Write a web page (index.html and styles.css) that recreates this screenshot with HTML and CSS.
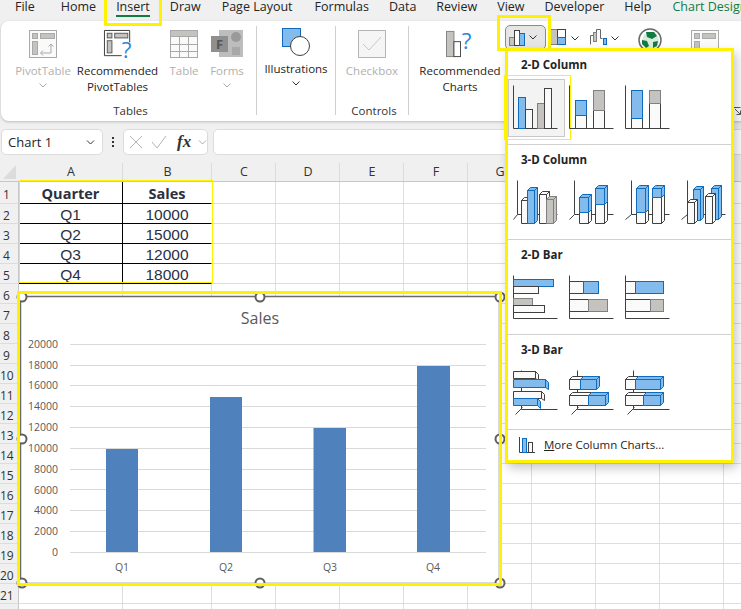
FILE: index.html
```html
<!DOCTYPE html>
<html lang="en">
<head>
<meta charset="utf-8">
<title>Insert chart</title>
<link rel="stylesheet" href="styles.css">
</head>
<body>
<div class="app">
  <nav class="tabs">
    <span class="tab t-file">File</span>
    <span class="tab t-home">Home</span>
    <span class="tab active">Insert</span>
    <span class="tab">Draw</span>
    <span class="tab t-pl">Page Layout</span>
    <span class="tab t-form">Formulas</span>
    <span class="tab">Data</span>
    <span class="tab">Review</span>
    <span class="tab">View</span>
    <span class="tab">Developer</span>
    <span class="tab">Help</span>
    <span class="tab green t-cd">Chart Design</span>
  </nav>

  <section class="ribbon">
    <div class="group g-tables">
      <div class="btns">
        <div class="rb w-pt dis">
          <svg class="ri" viewBox="0 0 28 28"><g class="dim"><rect x=".5" y=".5" width="27" height="27" class="fr"/><rect x="3.5" y="3.5" width="5" height="5"/><rect x="11.5" y="3.5" width="14" height="5"/><rect x="3.5" y="11.5" width="5" height="13"/><path class="ln" d="M12 23h10v-9M19.500 16.500l2.500-2.500 2.500 2.500M14 20.500l-2.500 2.500 2.500 2.500"/></g></svg>
          <span class="lb">PivotTable</span>
          <svg class="chev" viewBox="0 0 8 5"><path d="M.5.5 4 4 7.500.5"/></svg>
        </div>
        <div class="rb w-rec">
          <svg class="ri" viewBox="0 0 30 30"><g class="drk"><path class="ln" d="M19 27.500H.5V.500h27V13"/><rect x="3.500" y="3.500" width="5" height="5"/><rect x="11.500" y="3.500" width="14" height="5"/><rect x="3.500" y="11.500" width="5" height="13"/></g><text x="19" y="30" class="q">?</text></svg>
          <span class="lb">Recommended<br>PivotTables</span>
        </div>
        <div class="rb w-tb dis">
          <svg class="ri" viewBox="0 0 28 28"><g class="dim"><rect class="fr" x=".5" y=".5" width="27" height="27"/><rect x=".5" y=".5" width="27" height="6"/><path class="ln" d="M9.500 7v21M18.500 7v21M0 14.500h28M0 21.500h28"/></g></svg>
          <span class="lb">Table</span>
        </div>
        <div class="rb w-fm dis">
          <svg class="ri wide" viewBox="0 0 32 28"><rect x="8" y="0" width="24" height="27" fill="#bdbdbd"/><circle cx="25" cy="7" r="5" fill="#9a9a9a"/><rect x="21" y="17" width="8" height="8" fill="#a8a8a8"/><rect x="0" y="6" width="17" height="16" fill="#8f8f8f"/><text x="5" y="19" class="f">F</text></svg>
          <span class="lb">Forms</span>
          <svg class="chev" viewBox="0 0 8 5"><path d="M.5.5 4 4 7.500.5"/></svg>
        </div>
      </div>
      <div class="glabel">Tables</div>
    </div>
    <div class="sep"></div>
    <div class="group g-ill">
      <div class="btns">
        <div class="rb w-ill up">
          <svg class="ri" viewBox="0 0 28 28"><rect x=".5" y=".5" width="18" height="18" fill="#83bbed" stroke="#0f6cbd"/><circle cx="18" cy="18" r="9.500" fill="#fff" stroke="#404040"/></svg>
          <span class="lb">Illustrations</span>
          <svg class="chev dk" viewBox="0 0 8 5"><path d="M.5.5 4 4 7.500.5"/></svg>
        </div>
      </div>
    </div>
    <div class="sep"></div>
    <div class="group g-ctl">
      <div class="btns">
        <div class="rb w-cb dis">
          <svg class="ri" viewBox="0 0 28 28"><rect x=".5" y=".5" width="27" height="27" fill="#f5f5f5" stroke="#b5b5b5"/><path d="M5 14l6 6L23 7" fill="none" stroke="#c8c8c8"/></svg>
          <span class="lb">Checkbox</span>
        </div>
      </div>
      <div class="glabel">Controls</div>
    </div>
    <div class="sep"></div>
    <div class="rb w-rc">
      <svg class="ri" viewBox="0 0 30 28"><rect x=".5" y=".5" width="8" height="27" fill="#c4c3bf" stroke="#808080"/><rect x="8.500" y="11.500" width="7" height="16" fill="#fff" stroke="#404040"/><text x="17" y="19" class="q">?</text></svg>
      <span class="lb">Recommended<br>Charts</span>
    </div>
    <div class="minis">
      <div class="mini-active">
        <svg class="mi" viewBox="0 0 17 16"><rect x=".5" y="7.500" width="5" height="8" fill="#c4c3bf" stroke="#808080"/><rect x="5.500" y=".5" width="5" height="15" fill="#fff" stroke="#404040"/><rect x="10.500" y="3.500" width="5" height="12" fill="#83bbed" stroke="#0f6cbd"/></svg>
        <svg class="chev dk" viewBox="0 0 8 5"><path d="M.5.5 4 4 7.500.5"/></svg>
      </div>
      <svg class="mi m2" viewBox="0 0 17 16"><rect x=".5" y=".5" width="7" height="15" fill="#c4c3bf" stroke="#808080"/><rect x="7.500" y=".5" width="8" height="8" fill="#fff" stroke="#404040"/><rect x="7.500" y="8.500" width="8" height="7" fill="#83bbed" stroke="#0f6cbd"/></svg>
      <svg class="chev dk m3" viewBox="0 0 8 5"><path d="M.5.5 4 4 7.500.5"/></svg>
      <svg class="mi m4" viewBox="0 0 17 16"><path d="M.5 15.500V6.500h3v-3h3v-3h4v9h2" fill="#fafafa" stroke="#666"/><rect x="3.500" y="3.500" width="3" height="9" fill="#c4c3bf" stroke="#808080"/><rect x="13.500" y="9.500" width="3" height="6" fill="#83bbed" stroke="#0f6cbd"/></svg>
      <svg class="chev dk m3" viewBox="0 0 8 5"><path d="M.5.5 4 4 7.500.5"/></svg>
      <svg class="globe" viewBox="0 0 24 24"><circle cx="12" cy="12" r="11" fill="#fff" stroke="#6a6a6a" stroke-width="1.500"/><circle cx="12.500" cy="12.500" r="8.500" fill="#d8ecdd"/><path d="M8 4h8l3 4-5 3-5-2zM4 12l5 1 2 5-3 2-4-4zM15 14l5-1-1 5-4 2z" fill="#107c41"/></svg>
      <svg class="pivot" viewBox="0 0 28 28"><g class="dim"><rect class="fr" x=".5" y=".5" width="27" height="27"/><rect x="3.500" y="3.500" width="5" height="5"/><rect x="11.500" y="3.500" width="13" height="5"/><rect x="3.500" y="11.500" width="5" height="13"/></g></svg>
    </div>
    <svg class="launcher" viewBox="0 0 8 8"><path d="M.5.500h7M.5.500v3M2 2l5 5M7.500 3.500v4h-4" fill="none" stroke="#555"/></svg>
  </section>

  <section class="fbar">
    <div class="namebox"><span>Chart 1</span><svg class="chev dk" viewBox="0 0 8 5"><path d="M.5.5 4 4 7.500.5"/></svg></div>
    <div class="dots"><i></i><i></i><i></i></div>
    <div class="fxbox">
      <svg class="fi" viewBox="0 0 14 14"><path d="M1 1l12 12M13 1 1 13" fill="none" stroke="#b3b3b3"/></svg>
      <svg class="fi fc" viewBox="0 0 16 14"><path d="M1 7l5 6L15 1" fill="none" stroke="#b3b3b3"/></svg>
      <span class="fx">fx</span>
      <svg class="chev" viewBox="0 0 8 5"><path d="M.5.5 4 4 7.500.5"/></svg>
    </div>
    <div class="finput"></div>
  </section>

  <section class="sheet">
    <div class="colhead">
      <div class="corner"></div>
      <div class="ch ca">A</div><div class="ch cb">B</div>
      <div class="ch">C</div><div class="ch">D</div><div class="ch">E</div><div class="ch">F</div><div class="ch">G</div><div class="ch"></div><div class="ch"></div><div class="ch"></div>
    </div>
    <div class="row first"><div class="rh">1</div><div class="c ca d head">Quarter</div><div class="c cb d head">Sales</div><div class="rest"></div></div>
    <div class="row"><div class="rh">2</div><div class="c ca d">Q1</div><div class="c cb d">10000</div><div class="rest"></div></div>
    <div class="row"><div class="rh">3</div><div class="c ca d">Q2</div><div class="c cb d">15000</div><div class="rest"></div></div>
    <div class="row"><div class="rh">4</div><div class="c ca d">Q3</div><div class="c cb d">12000</div><div class="rest"></div></div>
    <div class="row"><div class="rh">5</div><div class="c ca d">Q4</div><div class="c cb d">18000</div><div class="rest"></div></div>
    <div class="row"><div class="rh">6</div><div class="c ca"></div><div class="c cb"></div><div class="rest"></div></div>
    <div class="row"><div class="rh">7</div><div class="c ca"></div><div class="c cb"></div><div class="rest"></div></div>
    <div class="row"><div class="rh">8</div><div class="c ca"></div><div class="c cb"></div><div class="rest"></div></div>
    <div class="row"><div class="rh">9</div><div class="c ca"></div><div class="c cb"></div><div class="rest"></div></div>
    <div class="row"><div class="rh">10</div><div class="c ca"></div><div class="c cb"></div><div class="rest"></div></div>
    <div class="row"><div class="rh">11</div><div class="c ca"></div><div class="c cb"></div><div class="rest"></div></div>
    <div class="row"><div class="rh">12</div><div class="c ca"></div><div class="c cb"></div><div class="rest"></div></div>
    <div class="row"><div class="rh">13</div><div class="c ca"></div><div class="c cb"></div><div class="rest"></div></div>
    <div class="row"><div class="rh">14</div><div class="c ca"></div><div class="c cb"></div><div class="rest"></div></div>
    <div class="row"><div class="rh">15</div><div class="c ca"></div><div class="c cb"></div><div class="rest"></div></div>
    <div class="row"><div class="rh">16</div><div class="c ca"></div><div class="c cb"></div><div class="rest"></div></div>
    <div class="row"><div class="rh">17</div><div class="c ca"></div><div class="c cb"></div><div class="rest"></div></div>
    <div class="row"><div class="rh">18</div><div class="c ca"></div><div class="c cb"></div><div class="rest"></div></div>
    <div class="row"><div class="rh">19</div><div class="c ca"></div><div class="c cb"></div><div class="rest"></div></div>
    <div class="row"><div class="rh">20</div><div class="c ca"></div><div class="c cb"></div><div class="rest"></div></div>
    <div class="row"><div class="rh">21</div><div class="c ca"></div><div class="c cb"></div><div class="rest"></div></div>
    <div class="row"><div class="rh"></div><div class="c ca"></div><div class="c cb"></div><div class="rest"></div></div>
  </section>

  <div class="data-frame"></div>

  <svg class="chart" viewBox="15 289 490 300">
    <rect x="20.500" y="296.500" width="479" height="287" fill="#fff" stroke="#6a6a6a" stroke-width="1.500"/>
    <g class="gl">
      <path d="M70 344.500h416M70 365.500h416M70 385.500h416M70 406.500h416M70 427.500h416M70 448.500h416M70 469.500h416M70 489.500h416M70 510.500h416M70 531.500h416M70 552.500h416"/>
    </g>
    <g fill="#4f81bd">
      <rect x="106" y="449" width="32" height="103"/>
      <rect x="210" y="397" width="32" height="155"/>
      <rect x="313.500" y="428" width="32.500" height="124"/>
      <rect x="417" y="366" width="33" height="186"/>
    </g>
    <text x="260" y="324" class="ctitle">Sales</text>
    <g class="ya">
      <text x="58" y="348">20000</text><text x="58" y="369">18000</text><text x="58" y="389">16000</text><text x="58" y="410">14000</text><text x="58" y="431">12000</text><text x="58" y="452">10000</text><text x="58" y="473">8000</text><text x="58" y="494">6000</text><text x="58" y="514">4000</text><text x="58" y="535">2000</text><text x="58" y="556">0</text>
    </g>
    <g class="xa">
      <text x="122" y="571">Q1</text><text x="226" y="571">Q2</text><text x="330" y="571">Q3</text><text x="433" y="571">Q4</text>
    </g>
    <g class="hd">
      <circle cx="22" cy="297" r="4.500"/><circle cx="260" cy="297" r="4.500"/><circle cx="500" cy="297" r="4.500"/>
      <circle cx="22" cy="439" r="4.500"/><circle cx="500" cy="439" r="4.500"/>
      <circle cx="22" cy="583" r="4.500"/><circle cx="260" cy="583" r="4.500"/><circle cx="500" cy="583" r="4.500"/>
    </g>
    <path class="yf" d="M18.500 292.500H500.500V584.500H18.500Z"/>
  </svg>

  <div class="mark mark-insert"></div>
  <div class="mark mark-btn"></div>

  <aside class="menu">
    <div class="msec">
      <div class="mtitle">2-D Column</div>
      <div class="icons">
        <div class="tile sel"><svg class="ico" viewBox="0 0 46 46"><g><path class="ax" d="M0 1V44H44"/><rect class="b" x="5" y="13" width="7" height="31"/><rect class="w" x="12" y="25" width="7" height="19"/><rect class="g" x="24" y="19" width="7" height="25"/><rect class="w" x="31" y="4" width="7" height="40"/></g></svg></div>
        <div class="tile"><svg class="ico" viewBox="0 0 46 46"><g><path class="ax" d="M0 1V44H44"/><rect class="w" x="6" y="31" width="11" height="13"/><rect class="b" x="6" y="16" width="11" height="15"/><rect class="w" x="24" y="26" width="11" height="18"/><rect class="g" x="24" y="6" width="11" height="20"/></g></svg></div>
        <div class="tile"><svg class="ico" viewBox="0 0 46 46"><g><path class="ax" d="M0 1V44H44"/><rect class="w" x="6" y="34" width="11" height="10"/><rect class="b" x="6" y="6" width="11" height="28"/><rect class="w" x="24" y="19" width="11" height="25"/><rect class="g" x="24" y="6" width="11" height="13"/></g></svg></div>
      </div>
    </div>
    <div class="msec">
      <div class="mtitle">3-D Column</div>
      <div class="icons">
        <div class="tile"><svg class="ico" viewBox="0 0 46 46"><g><path class="ax" d="M4 1V35H44M0 40l4-5"/>
          <path class="w" d="M8 21h7v23H8zM8 21l3-3h7l-3 3zM15 21l3-3v23l-3 3z"/>
          <path class="b" d="M14 11h7v33h-7zM14 11l3-3h7l-3 3zM21 11l3-3v33l-3 3z"/>
          <path class="w" d="M26 15h7v29h-7zM26 15l3-3h7l-3 3zM33 15l3-3v29l-3 3z"/>
          <path class="g" d="M33 20h7v24h-7zM33 20l3-3h7l-3 3zM40 20l3-3v24l-3 3z"/></g></svg></div>
        <div class="tile"><svg class="ico" viewBox="0 0 46 46"><g><path class="ax" d="M5 1V35H44M0 40l5-5"/>
          <path class="w" d="M10 33h9v11h-9zM19 33l3-3v11l-3 3z"/>
          <path class="b" d="M10 18h9v15h-9zM10 18l3-3h9l-3 3zM19 18l3-3v15l-3 3z"/>
          <path class="w" d="M26 25h9v19h-9zM35 25l3-3v19l-3 3z"/>
          <path class="b" d="M26 9h9v16h-9zM26 9l3-3h9l-3 3zM35 9l3-3v16l-3 3z"/></g></svg></div>
        <div class="tile"><svg class="ico" viewBox="0 0 46 46"><g><path class="ax" d="M6 1V35H44M0 40l6-5"/>
          <path class="w" d="M11 33h9v11h-9zM20 33l3-3v11l-3 3z"/>
          <path class="b" d="M11 9h9v24h-9zM11 9l3-3h9l-3 3zM20 9l3-3v24l-3 3z"/>
          <path class="w" d="M27 18h9v26h-9zM36 18l3-3v26l-3 3z"/>
          <path class="b" d="M27 9h9v9h-9zM27 9l3-3h9l-3 3zM36 9l3-3v9l-3 3z"/></g></svg></div>
        <div class="tile"><svg class="ico" viewBox="0 0 46 46"><g><path class="ax" d="M6 1V35H44M0 40l6-5"/>
          <path class="b" d="M12 10h7v31h-7zM12 10l3-3h7l-3 3zM19 10l3-3v31l-3 3z"/>
          <path class="w" d="M6 23h7v21H6zM6 23l3-3h7l-3 3zM13 23l3-3v21l-3 3z"/>
          <path class="b" d="M30 9h7v31h-7zM30 9l3-3h7l-3 3zM37 9l3-3v31l-3 3z"/>
          <path class="w" d="M24 17h7v27h-7zM24 17l3-3h7l-3 3zM31 17l3-3v27l-3 3z"/></g></svg></div>
      </div>
    </div>
    <div class="msec">
      <div class="mtitle">2-D Bar</div>
      <div class="icons">
        <div class="tile"><svg class="ico" viewBox="0 0 46 46"><g><path class="ax" d="M0 1V44H44"/><rect class="b" x="0" y="5" width="40" height="7"/><rect class="w" x="0" y="12" width="25" height="7"/><rect class="g" x="0" y="24" width="19" height="7"/><rect class="w" x="0" y="31" width="31" height="7"/></g></svg></div>
        <div class="tile"><svg class="ico" viewBox="0 0 46 46"><g><path class="ax" d="M0 1V44H44"/><rect class="w" x="0" y="7" width="14" height="12"/><rect class="b" x="14" y="7" width="15" height="12"/><rect class="w" x="0" y="25" width="19" height="12"/><rect class="g" x="19" y="25" width="19" height="12"/></g></svg></div>
        <div class="tile"><svg class="ico" viewBox="0 0 46 46"><g><path class="ax" d="M0 1V44H44"/><rect class="w" x="0" y="7" width="10" height="12"/><rect class="b" x="10" y="7" width="28" height="12"/><rect class="w" x="0" y="25" width="25" height="12"/><rect class="g" x="25" y="25" width="13" height="12"/></g></svg></div>
      </div>
    </div>
    <div class="msec">
      <div class="mtitle">3-D Bar</div>
      <div class="icons">
        <div class="tile"><svg class="ico" viewBox="0 0 46 46"><g><path class="ax" d="M8 1V40H44M2 45l7-7"/>
          <path class="w" d="M0 2h22v7H0zM22 2l3 3v6l-3-2z"/>
          <path class="b" d="M0 10h32v8H0zM32 10l3 3v7l-3-2z"/>
          <path class="w" d="M0 22h28v7H0zM28 22l3 3v6l-3-2z"/>
          <path class="b" d="M0 29h24v7H0zM24 29l3 3v7l-3-3z"/></g></svg></div>
        <div class="tile"><svg class="ico" viewBox="0 0 46 46"><g><path class="ax" d="M8 1V40H44M2 45l7-7"/>
          <path class="w" d="M0 10h11v10H0zM0 10l3-3h11l-3 3z"/>
          <path class="b" d="M11 10h16v10H11zM11 10l3-3h16l-3 3zM27 10l3-3v10l-3 3z"/>
          <path class="w" d="M0 26h19v10H0zM0 26l3-3h19l-3 3z"/>
          <path class="b" d="M19 26h17v10H19zM19 26l3-3h17l-3 3zM36 26l3-3v10l-3 3z"/></g></svg></div>
        <div class="tile"><svg class="ico" viewBox="0 0 46 46"><g><path class="ax" d="M8 1V40H44M2 45l7-7"/>
          <path class="w" d="M0 10h10v10H0zM0 10l3-3h10l-3 3z"/>
          <path class="b" d="M10 10h25v10H10zM10 10l3-3h25l-3 3zM35 10l3-3v10l-3 3z"/>
          <path class="w" d="M0 26h18v10H0zM0 26l3-3h18l-3 3z"/>
          <path class="b" d="M18 26h17v10H18zM18 26l3-3h17l-3 3zM35 26l3-3v10l-3 3z"/></g></svg></div>
      </div>
    </div>
    <div class="more">
      <svg class="mico" viewBox="0 0 16 16"><path class="ax" d="M.5 0V15.500H16"/><rect class="b" x="3.500" y="1.500" width="4" height="14"/><rect class="w" x="9.500" y="5.500" width="4" height="10"/></svg>
      <span><u>M</u>ore Column Charts...</span>
    </div>
  </aside>
</div>
</body>
</html>
```
FILE: styles.css
```css
* { box-sizing: border-box; }
html, body { margin: 0; padding: 0; }
body { width: 741px; height: 609px; overflow: hidden; background: #f0f0f0; font-family: "Open Sans", "Noto Sans", sans-serif; color: #242424; }
.app { position: relative; width: 741px; height: 609px; overflow: hidden; }

/* tabs */
.tabs { display: flex; height: 21px; padding-left: 15px; gap: 20px; font-size: 12.5px; line-height: 14px; white-space: nowrap; }
.tab { position: relative; height: 17px; }
.t-home { margin-left: 6px; }
.t-pl { margin-left: 1px; }
.t-form { margin-left: 2px; }
.t-cd { margin-left: 1px; }
.tab.active::after { content: ""; position: absolute; left: 0; right: 0; top: 15px; height: 2px; background: #107c41; }
.green { color: #107c41; }

/* ribbon */
.ribbon { display: flex; position: relative; height: 100px; margin-left: 1px; width: 760px; background: #fff; border-radius: 8px; box-shadow: 0 1px 3px rgba(0,0,0,.22); }
.group { display: flex; flex-direction: column; height: 100px; flex: none; }
.g-tables { width: 255px; }
.g-ill { width: 78px; }
.g-ctl { width: 72px; }
.sep { flex: none; width: 1px; height: 89px; margin-top: 5px; background: #cfcfcf; }
.btns { display: flex; flex: 1; }
.glabel { font-size: 11.5px; line-height: 14px; text-align: center; padding-bottom: 3px; color: #333; padding-left: 4px; }
.rb { display: flex; flex-direction: column; align-items: center; padding-top: 9px; flex: none; font-size: 11.5px; line-height: 16px; text-align: center; white-space: nowrap; }
.rb.up { padding-top: 7px; }
.ri { width: 28px; height: 28px; margin-bottom: 5px; overflow: visible; flex: none; }
.ri.wide { width: 32px; }
.dis { color: #b0b0b0; }
.w-pt { width: 56px; margin-left: 14px; }
.w-rec { width: 81px; margin-left: 6px; }
.w-tb { width: 40px; margin-left: 6px; }
.w-fm { width: 40px; margin-left: 3px; }
.w-ill { width: 78px; }
.w-cb { width: 72px; }
.w-rc { width: 90px; margin-left: 6px; }
.dim rect { fill: #c4c3bf; stroke: #a9a9a9; }
.dim rect.fr { fill: #fafafa; }
.dim .ln { fill: none; stroke: #a9a9a9; }
.drk rect { fill: #c4c3bf; stroke: #555; }
.drk .ln { fill: none; stroke: #333; }
.q { font-family: "Open Sans", sans-serif; font-size: 24px; fill: #2b88d8; }
.f { font-family: "Open Sans", sans-serif; font-size: 13px; font-weight: 700; fill: #555; }
.chev { width: 8px; height: 5px; margin-top: 4px; flex: none; }
.chev path { fill: none; stroke: #aaa; }
.chev.dk path { stroke: #333; }
.minis { display: flex; align-items: flex-start; padding-top: 4px; margin-left: 0; flex: none; }
.mini-active { display: flex; align-items: center; gap: 3px; width: 41px; height: 25px; padding-left: 3px; background: #e6e6e6; border: 1px solid #8a8a8a; border-radius: 5px; }
.mi { width: 17px; height: 16px; flex: none; }
.mini-active .chev { margin-top: 0; }
.m2 { margin: 4px 0 0 4px; }
.m3 { margin: 11px 0 0 4px; }
.m4 { margin: 4px 0 0 11px; }
.globe { width: 24px; height: 24px; margin: 3px 0 0 19px; flex: none; }
.pivot { width: 28px; height: 28px; margin: 5px 0 0 29px; flex: none; }
.launcher { position: absolute; left: 732px; top: 86px; width: 8px; height: 8px; }

/* formula bar */
.fbar { display: flex; align-items: center; height: 26px; margin-top: 8px; padding-left: 1px; width: 900px; }
.namebox { display: flex; align-items: center; justify-content: space-between; width: 102px; height: 26px; padding: 0 7px 0 6px; background: #fff; border: 1px solid #dcdcdc; border-radius: 5px; font-size: 13px; }
.namebox .chev { margin-top: 1px; width: 9px; }
.dots { display: flex; flex-direction: column; gap: 2px; width: 20px; align-items: center; }
.dots i { display: block; width: 2px; height: 2px; background: #333; }
.fxbox { display: flex; align-items: center; width: 85px; height: 26px; padding-left: 5px; background: #fff; border: 1px solid #dcdcdc; border-radius: 5px; gap: 8px; }
.fi { width: 14px; height: 14px; flex: none; }
.fi.fc { width: 16px; }
.fx { font-family: "Liberation Serif", serif; font-style: italic; font-weight: 700; font-size: 17px; color: #333; margin-left: 2px; margin-right: 0; }
.fxbox .chev { margin-top: 1px; width: 9px; margin-left: -1px; }
.finput { width: 600px; height: 26px; margin-left: 5px; background: #fff; border: 1px solid #dcdcdc; border-radius: 5px; }

/* sheet */
.sheet { margin-top: 8px; width: 800px; }
.colhead { display: flex; height: 19px; background: #f0f0f0; border-bottom: 1px solid #c6c6c6; }
.corner { width: 19px; flex: none; position: relative; }
.corner::after { content: ""; position: absolute; right: 3px; bottom: 2px; border-style: solid; border-width: 0 0 14px 13px; border-color: transparent transparent #dcdcdc transparent; }
.ch { flex: none; width: 64px; padding-left: 1px; text-align: center; font-size: 12.5px; line-height: 18px; color: #333; border-right: 1px solid #dcdcdc; }
.ca { width: 104px !important; }
.cb { width: 89px !important; }
.row { display: flex; height: 20px; background: #fff; }
.row.first { height: 22px; }
.rh { flex: none; width: 19px; padding-right: 5px; text-align: center; font-size: 12px; line-height: 23px; background: #f0f0f0; border-right: 1px solid #c6c6c6; border-bottom: 1px solid #dcdcdc; color: #333; white-space: nowrap; overflow: hidden; }
.first .rh { line-height: 25px; }
.c { flex: none; border-right: 1px solid #dedede; border-bottom: 1px solid #dedede; }
.rest { flex: 1; border-bottom: 1px solid #dedede; background: repeating-linear-gradient(90deg, transparent 0 63px, #dedede 63px 64px); }
.d { text-align: center; font-family: "Liberation Sans", Arial, sans-serif; font-size: 15.5px; line-height: 21px; color: #2a3042; border-bottom-color: #000; overflow: hidden; }
.d.ca { border-right-color: #000; }
.d.cb { border-right-color: transparent; }
.head { font-family: "Open Sans", sans-serif; font-weight: 700; font-size: 14.5px; line-height: 24px; }
.data-frame { position: absolute; left: 19px; top: 180px; width: 194px; height: 103px; border: 1.5px solid #fff200; }

/* chart */
.chart { position: absolute; left: 15px; top: 289px; width: 490px; height: 300px; overflow: visible; }
.gl path { fill: none; stroke: #d9d9d9; }
.ctitle { font-family: "Open Sans", sans-serif; font-size: 16px; fill: #595959; text-anchor: middle; }
.ya text { font-family: "Open Sans", sans-serif; font-size: 10.5px; fill: #595959; text-anchor: end; }
.xa text { font-family: "Open Sans", sans-serif; font-size: 10.5px; fill: #595959; text-anchor: middle; }
.hd circle { fill: #fff; stroke: #5f5f5f; stroke-width: 2; }
.yf { fill: none; stroke: #fff200; stroke-width: 3; }

.mark { position: absolute; border: 3px solid #fff200; }
.mark-insert { left: 104px; top: -3px; width: 58px; height: 29px; }
.mark-btn { left: 497px; top: 15px; width: 54px; height: 36px; }

/* gallery menu */
.menu { position: absolute; left: 505px; top: 48px; width: 229px; height: 415px; background: #fff; border: 3px solid #fff200; box-shadow: 3px 5px 10px rgba(0,0,0,.22); }
.msec { height: 95px; border-bottom: 1px solid #d0d0d0; padding-left: 5px; margin-top: 0; }
.msec:first-child { margin-top: -1px; }
.mtitle { height: 34px; padding: 6px 0 0 8px; font-size: 11.5px; font-weight: 700; line-height: 18px; color: #242424; }
.icons { display: flex; gap: 10px; }
.tile { position: relative; width: 46px; height: 46px; }
.ico { display: block; position: relative; width: 46px; height: 46px; overflow: visible; }
.ico g { transform: translate(.5px, .5px); }
.ax { fill: none; stroke: #404040; }
.b { fill: #83bbed; stroke: #0f6cbd; }
.w { fill: #fafafa; stroke: #404040; }
.g { fill: #c4c3bf; stroke: #808080; }
.sel::before { content: ""; position: absolute; left: -5px; top: -5px; width: 55px; height: 56px; background: #f3f3f3; border: 1px solid #c8c8c8; }
.sel::after { content: ""; position: absolute; left: -9px; top: -9px; width: 63px; height: 63px; border: 1px solid #fff200; border-left-width: 3px; }
.more { display: flex; align-items: center; height: 29px; padding-left: 11px; font-size: 11.5px; gap: 9px; color: #242424; }
.mico { width: 16px; height: 16px; flex: none; }
u { text-decoration: underline; }
```
